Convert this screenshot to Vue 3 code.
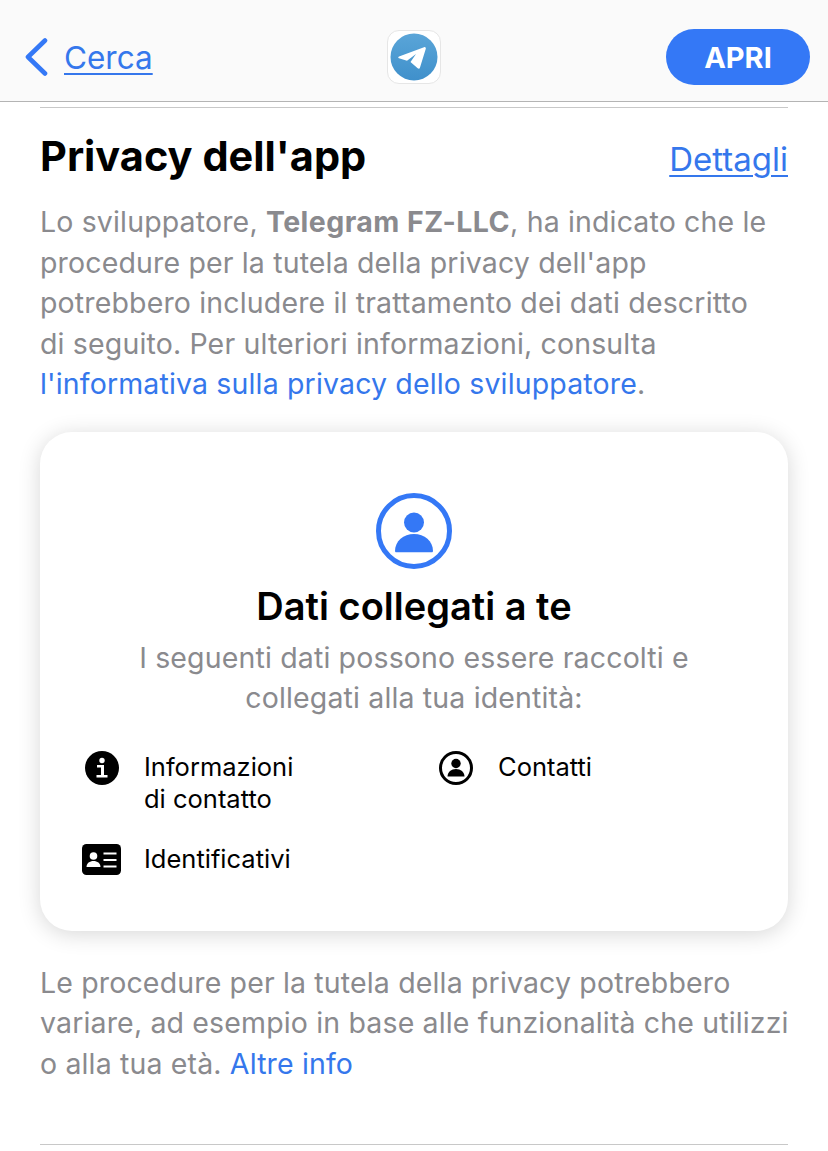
<script setup>
const items = [
  { id: "info", label: "Informazioni\ndi contatto" },
  { id: "contact", label: "Contatti" },
  { id: "card", label: "Identificativi" },
];
</script>

<template>
  <div class="page">
    <header class="topbar">
      <a class="back">
        <svg class="chevron" width="24" height="38" viewBox="0 0 24 38">
          <path d="M21 2.500 4 19l17 16.500" fill="none" stroke="#3478f6" stroke-width="4.600" stroke-linecap="round" stroke-linejoin="round" />
        </svg>
        <span class="link">Cerca</span>
      </a>
      <div class="app-icon">
        <svg width="48" height="48" viewBox="0 0 48 48">
          <defs>
            <linearGradient id="tg" x1="0" y1="0" x2="0" y2="1">
              <stop offset="0" stop-color="#5aa5d8" />
              <stop offset="1" stop-color="#3f90cb" />
            </linearGradient>
          </defs>
          <circle cx="24" cy="24" r="23.500" fill="url(#tg)" />
          <path d="M9 23.400 34 14.200c1.200-.4 2 .4 1.800 1.600L30 34.500c-.3 1.300-1.400 1.500-2.300.7l-7.200-6.200 5.500-8-9 6.800-8-2.500c-1-.3-1-1.600 0-1.900z" fill="#fff" />
        </svg>
      </div>
      <button class="open">APRI</button>
    </header>

    <main class="content">
      <div class="rule"></div>
      <div class="title-row">
        <h1>Privacy dell'app</h1>
        <a class="link details">Dettagli</a>
      </div>
      <p class="text intro">
        Lo sviluppatore, <b>Telegram FZ-LLC</b>, ha indicato che le<br />
        procedure per la tutela della privacy dell'app<br />
        potrebbero includere il trattamento dei dati descritto<br />
        di seguito. Per ulteriori informazioni, consulta<br />
        <span class="blue">l'informativa sulla privacy dello sviluppatore</span>.
      </p>

      <section class="card">
        <svg class="person" width="76" height="76" viewBox="0 0 76 76">
          <circle cx="38" cy="38" r="35.500" fill="none" stroke="#3478f6" stroke-width="5" />
          <circle cx="38" cy="29.500" r="10" fill="#3478f6" />
          <path d="M19 58c0-10 8.500-17 19-17s19 7 19 17c0 .8-.6 1.300-1.300 1.300H20.300c-.7 0-1.300-.5-1.300-1.300z" fill="#3478f6" />
        </svg>
        <h2>Dati collegati a te</h2>
        <p class="card-sub">I seguenti dati possono essere raccolti e collegati alla tua identità:</p>
        <div class="items">
          <div class="item" v-for="item in items" :key="item.id">
            <div class="item-icon">
              <svg v-if="item.id === 'info'" width="34" height="34" viewBox="0 0 34 34">
                <circle cx="17" cy="17" r="17" fill="#000" />
                <circle cx="17" cy="9.500" r="2.700" fill="#fff" />
                <path d="M12 14h7v10h3.500v2.500H11.500V24H16v-7.500h-4z" fill="#fff" />
              </svg>
              <svg v-else-if="item.id === 'contact'" width="34" height="34" viewBox="0 0 34 34">
                <circle cx="17" cy="17" r="15.500" fill="none" stroke="#000" stroke-width="3" />
                <circle cx="17" cy="12.500" r="4.700" fill="#000" />
                <path d="M8.500 25.500c0-4.500 3.800-7.500 8.500-7.500s8.500 3 8.500 7.500z" fill="#000" />
              </svg>
              <svg v-else width="39" height="31" viewBox="0 0 39 31">
                <rect width="39" height="31" rx="4.500" fill="#000" />
                <circle cx="11.500" cy="12" r="3.800" fill="#fff" />
                <path d="M4.500 23c0-3.800 3.200-6 7-6s7 2.200 7 6z" fill="#fff" />
                <path d="M21.500 9.500h13M21.500 16h13M21.500 22.500h13" stroke="#fff" stroke-width="2.200" />
              </svg>
            </div>
            <span class="item-label">{{ item.label }}</span>
          </div>
        </div>
      </section>

      <p class="text outro">
        Le procedure per la tutela della privacy potrebbero<br />
        variare, ad esempio in base alle funzionalità che utilizzi<br />
        o alla tua età. <span class="blue">Altre info</span>
      </p>
      <div class="rule bottom"></div>
    </main>
  </div>
</template>

<style>
html, body {
  background: #fff;
}
</style>

<style scoped>
.page {
  width: 828px;
  height: 1151px;
  overflow: hidden;
  background: #fff;
  font-family: Inter, "Liberation Sans", sans-serif;
}
.topbar {
  height: 102px;
  box-sizing: border-box;
  background: #fafafa;
  border-bottom: 1px solid #b4b4b4;
  display: grid;
  grid-template-columns: 1fr auto 1fr;
  align-items: center;
  padding: 13px 18px 0;
}
.back {
  display: flex;
  align-items: center;
  gap: 16px;
  margin-left: 6px;
}
.link {
  color: #3577ec;
  text-decoration: underline;
  text-underline-offset: 4px;
  text-decoration-thickness: 2px;
  font-size: 31.500px;
}
.app-icon {
  width: 54px;
  height: 54px;
  box-sizing: border-box;
  border: 1px solid #e6e6e6;
  border-radius: 12px;
  background: #fff;
  display: flex;
  align-items: center;
  justify-content: center;
}
.open {
  justify-self: end;
  width: 144px;
  height: 56px;
  border: none;
  border-radius: 28px;
  background: #3478f6;
  color: #fff;
  font: 700 29px Inter, "Liberation Sans", sans-serif;
}
.content {
  padding: 5px 40px 0;
}
.rule {
  height: 1px;
  background: #c8c8c8;
}
.title-row {
  display: flex;
  justify-content: space-between;
  align-items: baseline;
  margin-top: 23px;
  height: 52px;
}
h1 {
  margin: 0;
  font-size: 41.500px;
  font-weight: 700;
  color: #000;
}
.details {
  font-size: 33px;
}
.text {
  margin: 0;
  font-size: 28.500px;
  letter-spacing: 0.15px;
  line-height: 40.500px;
  color: #8a8a8e;
  white-space: nowrap;
}
.intro {
  margin-top: 19px;
}
.text b {
  font-weight: 700;
  letter-spacing: 0.45px;
}
.blue {
  color: #3577ec;
}
.card {
  margin-top: 27px;
  height: 499px;
  box-sizing: border-box;
  padding-top: 61px;
  border-radius: 32px;
  background: #fff;
  box-shadow: 0 3px 22px rgba(0, 0, 0, 0.16);
  display: flex;
  flex-direction: column;
  align-items: center;
}
h2 {
  margin: 12px 0 0;
  font-size: 38px;
  line-height: 50px;
  font-weight: 600;
  color: #000;
}
.card-sub {
  margin: 7px 0 0;
  width: 600px;
  text-align: center;
  font-size: 28.500px;
  letter-spacing: 0.15px;
  line-height: 40px;
  color: #8a8a8e;
}
.items {
  align-self: stretch;
  margin-top: 33px;
  padding-left: 42px;
  display: grid;
  grid-template-columns: 354px 1fr;
  row-gap: 28px;
}
.item {
  display: flex;
  gap: 23px;
}
.item-icon {
  width: 39px;
  height: 34px;
  flex: none;
  display: flex;
  justify-content: center;
  align-items: center;
}
.item-label {
  white-space: pre-line;
  font-size: 25.500px;
  line-height: 32px;
  color: #000;
}
.outro {
  margin-top: 32px;
}
.bottom {
  margin-top: 60px;
}
</style>
